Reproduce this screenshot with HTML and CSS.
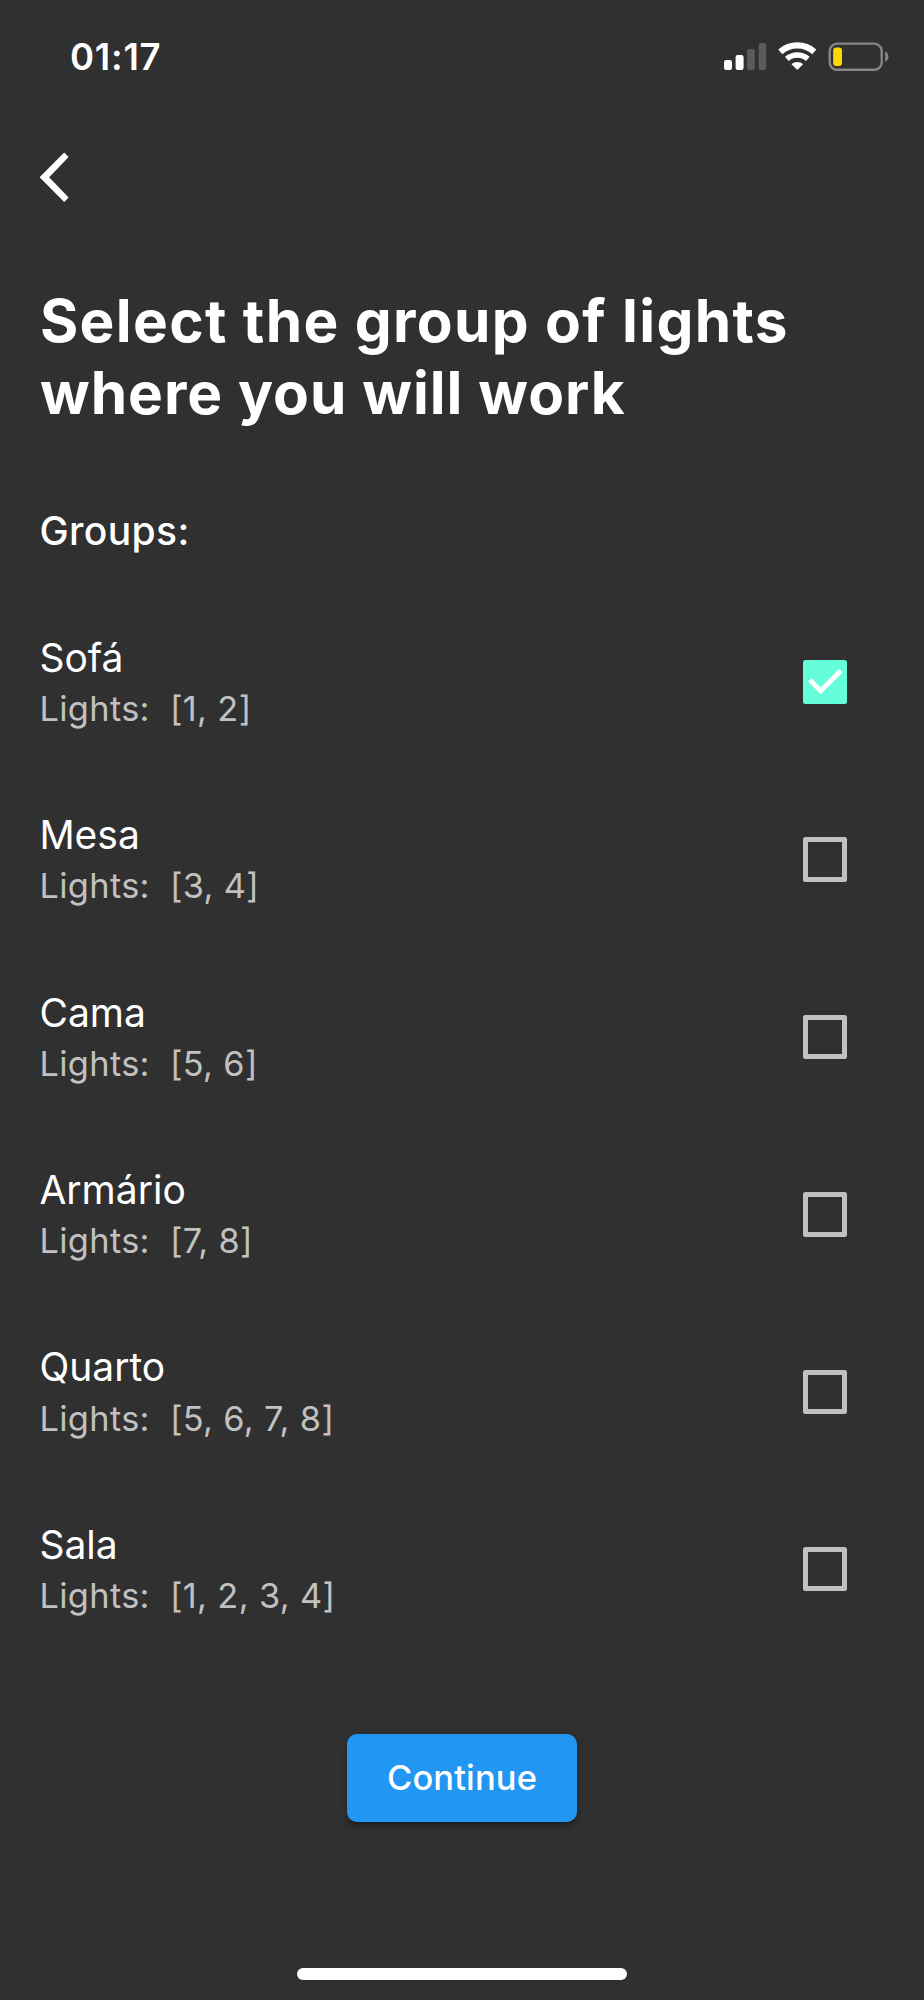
FILE: index.html
```html
<!DOCTYPE html>
<html lang="en">
<head>
<meta charset="utf-8">
<title>Select group</title>
<link rel="stylesheet" href="styles.css">
</head>
<body>
<div class="screen">
  <header class="status">
    <span class="time">01:17</span>
    <svg class="status-icons" width="168" height="32" viewBox="0 0 168 32">
      <g fill="#fff">
        <rect x="4" y="20" width="8" height="10" rx="2.2"/>
        <rect x="15.6" y="15" width="8" height="15" rx="2.2"/>
      </g>
      <g fill="#5b5b5b">
        <rect x="27.1" y="9" width="7.7" height="21" rx="2.2"/>
        <rect x="38.7" y="3" width="7.6" height="27" rx="2.2"/>
      </g>
      <g fill="none" stroke="#fff">
        <path d="M60.3 11.8A26 26 0 0 1 94.3 11.8" stroke-width="6.2"/>
        <path d="M66.8 18.8A16.2 16.2 0 0 1 87.8 18.8" stroke-width="5.6"/>
      </g>
      <path d="M77.3 30 71.5 24.2C74.6 21.2 80 21.2 83.1 24.2Z" fill="#fff"/>
      <rect x="109.7" y="3.6" width="52" height="26.2" rx="7.5" fill="none" stroke="#868686" stroke-width="2.4"/>
      <rect x="113.2" y="7.5" width="8.8" height="18.5" rx="3" fill="#ffd60a"/>
      <path d="M165.2 11.2C169.5 13.2 169.5 20 165.2 22Z" fill="#868686"/>
    </svg>
  </header>
  <nav class="nav">
    <svg width="30" height="52" viewBox="0 0 30 52"><path d="M25.2 .5 29.6 5 10.2 25.200 29.6 45.400 25.2 49.900 .6 25.200Z" fill="#fff"/></svg>
  </nav>
  <h1 class="title"><span class="line first">Select the group of lights</span><span class="line">where you will work</span></h1>
  <h2 class="label">Groups:</h2>
  <ul class="groups">
    <li class="row"><div><div class="name">Sofá</div><div class="lights">Lights:&nbsp; [1, 2]</div></div><svg class="box on" viewBox="0 0 44.4 44.4"><path d="M6.8 19.9 17.7 30.9 37.8 10.8"/></svg></li>
    <li class="row"><div><div class="name">Mesa</div><div class="lights">Lights:&nbsp; [3, 4]</div></div><span class="box"></span></li>
    <li class="row"><div><div class="name">Cama</div><div class="lights">Lights:&nbsp; [5, 6]</div></div><span class="box"></span></li>
    <li class="row"><div><div class="name">Armário</div><div class="lights">Lights:&nbsp; [7, 8]</div></div><span class="box"></span></li>
    <li class="row"><div><div class="name">Quarto</div><div class="lights">Lights:&nbsp; [5, 6, 7, 8]</div></div><span class="box"></span></li>
    <li class="row"><div><div class="name">Sala</div><div class="lights">Lights:&nbsp; [1, 2, 3, 4]</div></div><span class="box"></span></li>
  </ul>
  <button class="continue">Continue</button>
  <div class="home"></div>
</div>
</body>
</html>
```
FILE: styles.css
```css
* { box-sizing: border-box; }
body { margin: 0; background: #303030; }
.screen {
  width: 924px;
  height: 2000px;
  padding: 40px 0 20px;
  display: flex;
  flex-direction: column;
  background: #303030;
  color: #fff;
  font-family: Inter, "Liberation Sans", sans-serif;
}
.status {
  height: 32px;
  padding: 0 36px 0 70px;
  display: flex;
  justify-content: space-between;
}
.time { font-size: 36.5px; font-weight: 600; line-height: 35px; letter-spacing: .75px; }
.status-icons { display: block; overflow: visible; }
.nav { height: 213.3px; padding: 80px 0 0 39px; }
.nav svg { display: block; }
.title {
  margin: 0;
  padding-left: 40px;
  font-size: 58.5px;
  font-weight: 700;
  line-height: 71.4px;
}
.line { display: block; letter-spacing: .98px; }
.first { letter-spacing: 1.32px; }
.label {
  margin: 78.9px 0 38.5px;
  padding-left: 39.4px;
  font-size: 39px;
  font-weight: 500;
  line-height: 48px;
  letter-spacing: .4px;
}
.groups { margin: 0; padding: 0; list-style: none; }
.row {
  height: 177.4px;
  padding: 0 76.6px 0 39.4px;
  display: flex;
  align-items: center;
  justify-content: space-between;
}
.name { margin-top: -.6px; font-size: 39px; line-height: 48px; letter-spacing: 0; }
.lights {
  margin-top: 6.2px;
  color: #c1c1c1;
  font-size: 34.3px;
  line-height: 42px;
  letter-spacing: .37px;
}
.box {
  width: 44.4px;
  height: 44.4px;
  border: 5px solid #c1c1c1;
  border-radius: 2.5px;
}
.box.on { border: 0; background: #64ffda; }
.box.on path { fill: none; stroke: #fff; stroke-width: 4.9; }
.continue {
  align-self: center;
  width: 229.2px;
  height: 88.7px;
  margin: 75.8px 0 0;
  padding: 0;
  border: 0;
  border-radius: 9.9px;
  background: #2196f3;
  color: #fff;
  font: 500 34.5px/42px Inter, "Liberation Sans", sans-serif;
  letter-spacing: .12px;
  box-shadow: 0 5px 5px -2px rgba(0,0,0,.2), 0 3px 5px rgba(0,0,0,.14), 0 2px 10px rgba(0,0,0,.12);
}
.home {
  align-self: center;
  width: 330.5px;
  height: 12.5px;
  margin-top: auto;
  border-radius: 6.2px;
  background: #fff;
}
```
